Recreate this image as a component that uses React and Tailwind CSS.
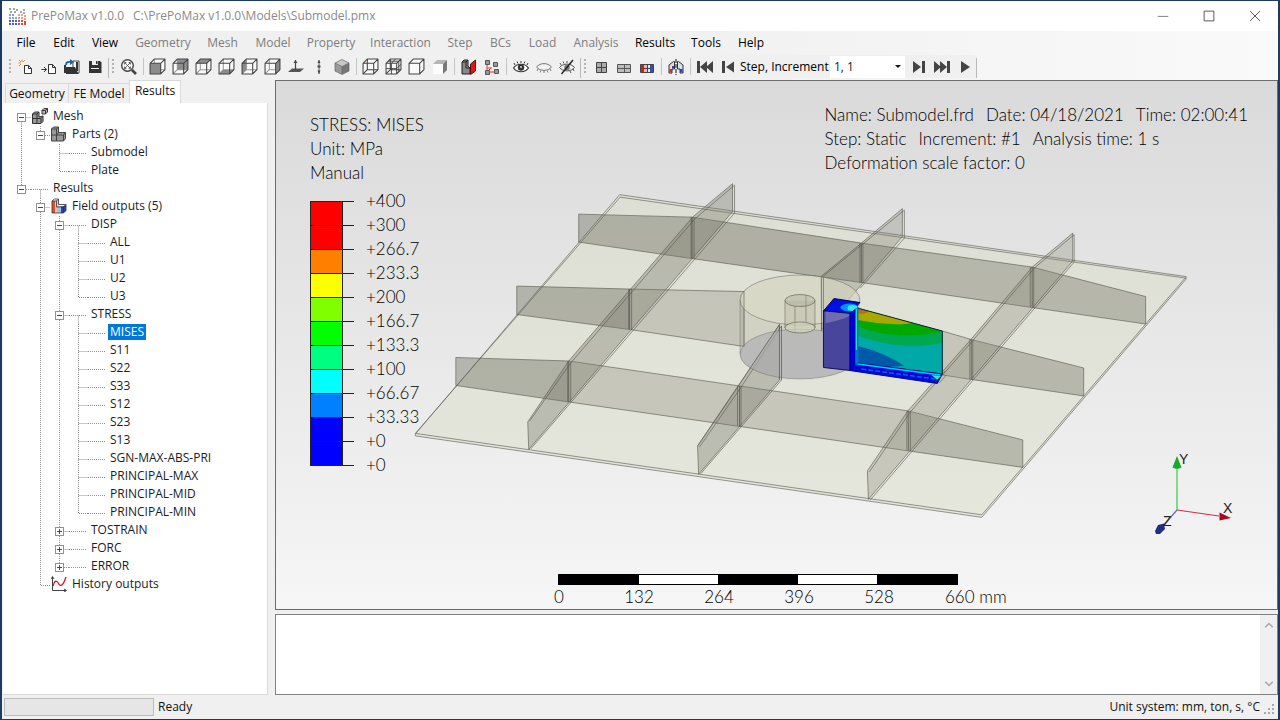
import React from "react";

const MENU = [
  ["File", "w-[38px]", true],
  ["Edit", "w-[38px]", true],
  ["View", "w-[44px]", true],
  ["Geometry", "w-[72px]", false],
  ["Mesh", "w-[47px]", false],
  ["Model", "w-[54px]", false],
  ["Property", "w-[62px]", false],
  ["Interaction", "w-[77px]", false],
  ["Step", "w-[42px]", false],
  ["BCs", "w-[39px]", false],
  ["Load", "w-[45px]", false],
  ["Analysis", "w-[62px]", false],
  ["Results", "w-[56px]", true],
  ["Tools", "w-[46px]", true],
  ["Help", "w-[44px]", true],
];

/* Guide letters: "|" line passing through, "T" branch, "L" last branch, "F" first root, " " empty. */
const TREE = [
  { g: "F", box: "-", icon: "mesh", label: "Mesh", open: true },
  { g: "|L", box: "-", icon: "parts", label: "Parts (2)", open: true },
  { g: "| T", label: "Submodel" },
  { g: "| L", label: "Plate" },
  { g: "L", box: "-", label: "Results", open: true },
  { g: " T", box: "-", icon: "field", label: "Field outputs (5)", open: true },
  { g: " |T", box: "-", label: "DISP", open: true },
  { g: " ||T", label: "ALL" },
  { g: " ||T", label: "U1" },
  { g: " ||T", label: "U2" },
  { g: " ||L", label: "U3" },
  { g: " |T", box: "-", label: "STRESS", open: true },
  { g: " ||T", label: "MISES", selected: true },
  { g: " ||T", label: "S11" },
  { g: " ||T", label: "S22" },
  { g: " ||T", label: "S33" },
  { g: " ||T", label: "S12" },
  { g: " ||T", label: "S23" },
  { g: " ||T", label: "S13" },
  { g: " ||T", label: "SGN-MAX-ABS-PRI" },
  { g: " ||T", label: "PRINCIPAL-MAX" },
  { g: " ||T", label: "PRINCIPAL-MID" },
  { g: " ||L", label: "PRINCIPAL-MIN" },
  { g: " |T", box: "+", label: "TOSTRAIN" },
  { g: " |T", box: "+", label: "FORC" },
  { g: " |L", box: "+", label: "ERROR" },
  { g: " L", icon: "history", label: "History outputs" },
];

const LEGEND_COLORS = ["#ff0000", "#ff0000", "#ff8000", "#ffff00", "#80ff00", "#00ff00", "#00ff80", "#00ffff", "#0080ff", "#0000ff", "#0000ff"];
const LEGEND_VALUES = ["+400", "+300", "+266.7", "+233.3", "+200", "+166.7", "+133.3", "+100", "+66.67", "+33.33", "+0", "+0"];

function Svg({ children, className = "h-4 w-4" }) {
  return (
    <svg viewBox="0 0 16 16" className={className} fill="none" aria-hidden="true">
      {children}
    </svg>
  );
}

function AppLogo() {
  const blue = [[0, 0], [4, 0], [7, 1], [1, 3], [5, 3], [0, 6], [3, 6], [0, 9], [3, 9], [6, 9], [0, 12], [3, 12], [6, 12], [0, 15], [3, 15], [6, 15]];
  const red = [[14, 1], [11, 3], [14, 4], [9, 6], [12, 6], [15, 7], [9, 9], [12, 9], [15, 10], [9, 12], [12, 12], [15, 13], [9, 15], [12, 15], [15, 15]];
  return (
    <svg viewBox="0 0 17 17" className="h-[17px] w-[17px]" aria-hidden="true">
      {blue.map(([x, y], i) => (
        <rect key={i} x={x} y={y} width="2" height="2" fill={y > 10 ? "#3f63b5" : y > 5 ? "#8ea3d3" : "#9aa5b5"} />
      ))}
      {red.map(([x, y], i) => (
        <rect key={i} x={x} y={y} width="2" height="2" fill={y > 11 ? "#c65348" : y > 5 ? "#eda182" : "#a8a8b4"} />
      ))}
    </svg>
  );
}

const CUBE_FACES = {
  front: "M1 5H11V15H1Z",
  back: "M5 1H15V11H5Z",
  top: "M1 5L5 1H15L11 5Z",
  bottom: "M1 15L5 11H15L11 15Z",
  left: "M1 5L5 1V11L1 15Z",
  right: "M11 5L15 1V11L11 15Z",
};

function Cube({ face, solid, grid }) {
  return (
    <svg viewBox="0 0 16 16" className="h-[17px] w-[17px]" fill="none" aria-hidden="true">
      <path d="M1 5L5 1H15V11L11 15H1Z" fill="#fafafa" />
      {!solid && <path d="M5 1V11H15M5 11L1 15" stroke={face ? "#999" : "#444"} />}
      {face && <path d={CUBE_FACES[face]} fill="#8c8c8c" />}
      <path d="M1 5H11V15H1ZM1 5L5 1H15L11 5M15 1V11L11 15" stroke="#444" strokeLinejoin="round" />
      {grid && <path d="M6 5V15M1 10H11M3 3H13V13M6 5L10 1M11 10L15 6" stroke="#444" strokeWidth="0.900" />}
    </svg>
  );
}

const ICONS = {
  newModel: (
    <Svg>
      <path d="M6.500 6.500H10.500L13.500 9.500V14.500H6.500Z" fill="#fff" stroke="#333" />
      <path d="M10.500 6.500V9.500H13.500" stroke="#333" />
      <path d="M4 0.500V3M0.500 4H3M1 1L3 3M7 1L5 3M1 7L3 5" stroke="#d99a3c" />
    </Svg>
  ),
  importFile: (
    <Svg>
      <path d="M7.500 5.500H11.500L14.500 8.500V14.500H7.500Z" fill="#fff" stroke="#333" />
      <path d="M11.500 5.500V8.500H14.500M0.500 10.500H5.500M3 8L5.500 10.500L3 13" stroke="#333" />
    </Svg>
  ),
  openFile: (
    <Svg>
      <path d="M9 2H15V14H9Z" fill="#fff" stroke="#444" />
      <path d="M1 8H11L14.500 15H2Z" fill="#333" />
      <path d="M1 6V14M13 3V12" stroke="#333" strokeWidth="2" />
      <path d="M2 6C2 3 4 2.500 8 3" stroke="#1d5f96" strokeWidth="1.800" />
      <path d="M6 0L10 3L6 6Z" fill="#1d5f96" />
    </Svg>
  ),
  save: (
    <Svg>
      <path d="M2 2H13L14.500 3.500V14H2Z" fill="#333" />
      <path d="M5 2H11V6H5ZM4 9H12V10H4Z" fill="#eee" />
      <path d="M9 2H10.500V5H9Z" fill="#333" />
    </Svg>
  ),
  zoomFit: (
    <Svg>
      <circle cx="6.500" cy="6.500" r="5.800" fill="#fff" stroke="#444" strokeWidth="1.400" />
      <path d="M4 4L9 9M9 4L4 9M3.500 5.500V3.500H5.500M7.500 3.500H9.500V5.500M9.500 7.500V9.500H7.500M5.500 9.500H3.500V7.500" stroke="#555" strokeWidth="0.900" />
      <path d="M11 11L15 15" stroke="#444" strokeWidth="2.600" />
    </Svg>
  ),
  normalView: (
    <Svg>
      <path d="M0 13L4 9.500H16L12 13Z" fill="#555" />
      <path d="M7.500 1V11" stroke="#444" strokeWidth="1.200" />
      <path d="M5.500 4L7.500 1L9.500 4Z" fill="#444" />
    </Svg>
  ),
  verticalView: (
    <Svg>
      <path d="M8 1V15" stroke="#555" />
      <path d="M6.500 4L8 1L9.500 4ZM6.500 6.500H9.500V8.500H6.500ZM6.500 11.500H9.500L8 15Z" fill="#444" />
    </Svg>
  ),
  isometric: (
    <Svg>
      <path d="M8 0.500L15 4L8 7.500L1 4Z" fill="#c9c9c9" />
      <path d="M1 4L8 7.500V15.500L1 12Z" fill="#9a9a9a" />
      <path d="M15 4L8 7.500V15.500L15 12Z" fill="#777" />
      <path d="M8 0.500L15 4V12L8 15.500L1 12V4ZM1 4L8 7.500L15 4M8 7.500V15" stroke="#666" strokeWidth="0.700" />
    </Svg>
  ),
  shaded: (
    <Svg>
      <path d="M1 5L5 1H15L11 5Z" fill="#b5b5b5" />
      <path d="M11 5L15 1V11L11 15Z" fill="#777" />
      <path d="M1 5H11V15H1Z" fill="#fcfcfc" />
    </Svg>
  ),
  section: (
    <Svg>
      <path d="M1 3L3 1H7V7L9 9V15H1Z" fill="#888" stroke="#222" />
      <path d="M1 3H5V9H9M5 3L7 1" stroke="#222" />
      <path d="M9.500 5L14.500 1V12L9.500 15.500Z" fill="#e01515" stroke="#5a1010" />
    </Svg>
  ),
  exploded: (
    <Svg>
      <path d="M3 3V13M3 9H8M3 13L7 9M10 13H5" stroke="#e33" />
      <path d="M1.500 1.500H5.500V5.500H1.500ZM9.500 3.500H13.500V7.500H9.500ZM1.500 11.500H5.500V15.500H1.500ZM10.500 10.500H14.500V14.500H10.500Z" fill="#999" stroke="#555" />
    </Svg>
  ),
  eye: (
    <Svg>
      <path d="M0.500 9C4 4 12 4 15.500 9C12 14 4 14 0.500 9Z" fill="#fff" stroke="#333" strokeWidth="1.200" />
      <circle cx="8" cy="8.500" r="3.200" fill="#333" />
      <circle cx="8" cy="8" r="1" fill="#ddd" />
      <path d="M2 6L1 4M5 4.500L4 2.500M8 4V2M11 4.500L12 2.500M14 6L15 4" stroke="#333" />
    </Svg>
  ),
  eyeClosed: (
    <Svg>
      <path d="M0.500 8C4 3.500 12 3.500 15.500 8C12 12.500 4 12.500 0.500 8Z" stroke="#777" />
      <path d="M2 10L1 12M5 11.500L4 13.500M8 12V14M11 11.500L12 13.500M14 10L15 12" stroke="#777" />
    </Svg>
  ),
  eyeOff: (
    <Svg>
      <path d="M0.500 8.500C4 4 12 4 15.500 8.500C12 13 4 13 0.500 8.500Z" stroke="#555" />
      <circle cx="8" cy="8.500" r="2.800" fill="#777" />
      <path d="M2 6L1 4M5 4.500L4 2.500M8 4V2M11 12L12 14M14 10L15 12" stroke="#555" />
      <path d="M2.500 15L14 1" stroke="#222" strokeWidth="1.400" />
    </Svg>
  ),
  gridFour: (
    <Svg>
      <path d="M3.500 3.500H13.500V13.500H3.500Z" fill="#aaa" stroke="#444" />
      <path d="M8.500 3V13M3 8.500H13" stroke="#444" />
    </Svg>
  ),
  gridWide: (
    <Svg>
      <path d="M1.500 5.500H14.500V13.500H1.500Z" fill="#bbb" stroke="#555" />
      <path d="M8.500 5V13M1.500 9.500H14.500" stroke="#555" />
    </Svg>
  ),
  gridColor: (
    <Svg>
      <path d="M1.500 5H5V13H1.500Z" fill="#c22" />
      <path d="M5 5H8V13H5Z" fill="#f0b8a0" />
      <path d="M8 5H11V13H8Z" fill="#dde6f5" />
      <path d="M11 5H14.500V13H11Z" fill="#2e4fc0" />
      <path d="M1.500 5.500H14.500V13.500H1.500ZM8.500 5V13M4 9.500H12" stroke="#444" />
    </Svg>
  ),
  symmetry: (
    <Svg>
      <path d="M5.500 2.500L1 6V14H4V10H6.500V2.500Z" fill="#f2d8d0" stroke="#333" />
      <path d="M10.500 2.500L15 6V14H12V10H9.500V2.500Z" fill="#d5e0f5" stroke="#333" />
      <path d="M1.500 10H4V13.500H1.500Z" fill="#d22" />
      <path d="M12 10H14.500V13.500H12ZM4 7H6V9.500H4Z" fill="#2448b8" />
      <path d="M8 0V16" stroke="#111" strokeDasharray="4 1" />
    </Svg>
  ),
  first: (
    <svg viewBox="0 0 18 16" className="h-4 w-[18px]" aria-hidden="true">
      <path d="M1 2H4V14H1ZM4 8L11 2V14ZM10 8L17 2V14Z" fill="#444" />
    </svg>
  ),
  previous: (
    <Svg>
      <path d="M2 2H5V14H2ZM6 8L14 2.500V13.500Z" fill="#444" />
    </Svg>
  ),
  next: (
    <Svg>
      <path d="M11 2H14V14H11ZM10 8L2 2V14Z" fill="#444" />
    </Svg>
  ),
  last: (
    <svg viewBox="0 0 18 16" className="h-4 w-[18px]" aria-hidden="true">
      <path d="M14 2H17V14H14ZM14 8L7 2V14ZM8 8L1 2V14Z" fill="#444" />
    </svg>
  ),
  play: (
    <Svg>
      <path d="M4 2L13 8L4 14Z" fill="#444" />
    </Svg>
  ),
  mesh: (
    <Svg>
      <path d="M0.500 6L2.500 4H7V9L11 8V13.500L9 15.500H0.500Z" fill="#999" stroke="#333" />
      <path d="M0.500 6H5V15M0.500 10.500H9V15M9 10.500L11 8.500M5 6L7 4" stroke="#333" />
      <path d="M10 2.500L12 0.500H15.500V4L13.500 6H10ZM10 2.500H13.500V6M13.500 2.500L15.500 0.500" fill="#bbb" stroke="#333" />
    </Svg>
  ),
  parts: (
    <Svg>
      <path d="M0.500 3L2.500 1H7.500V6.500H14.500V12.500L12.500 15H0.500Z" fill="#999" stroke="#444" />
      <path d="M0.500 3H5.500V15M0.500 9H12.500V15M5.500 3L7.500 1M12.500 9L14.500 6.500M5.500 9L7.500 6.500" stroke="#444" />
    </Svg>
  ),
  field: (
    <Svg>
      <path d="M1 3H5.500V15H1Z" fill="#e0512f" />
      <path d="M4 3L7.500 1V7L6 15H4Z" fill="#f3c9b5" />
      <path d="M6 8H12V15H6Z" fill="#a9bbe8" />
      <path d="M10 9L15 7V13L12 15H10Z" fill="#2343a8" />
      <path d="M1 3L3.500 1H7.500V6.500H15V12.500L12.500 15H1ZM1 3H5.500V9H12.500V15M5.500 3L7.500 1M12.500 9L15 6.500" stroke="#333" strokeWidth="0.800" />
    </Svg>
  ),
  history: (
    <Svg>
      <path d="M1.500 1V14.500H15M0 3L1.500 0.500L3 3M13 13L15.500 14.500L13 16" stroke="#444" />
      <path d="M2 10C4 4 5.500 4 7.500 7.500C9.500 11 12 10 15 1" stroke="#c11a2b" strokeWidth="1.300" />
    </Svg>
  ),
};

function Tool({ label, icon }) {
  return (
    <button type="button" aria-label={label} className="flex h-[22px] w-[23px] shrink-0 items-center justify-center">
      {icon}
    </button>
  );
}

function Separator() {
  return (
    <span className="flex w-[6px] shrink-0 justify-center">
      <span className="h-[17px] w-px bg-[#c4c4c4]" />
    </span>
  );
}

function Grip() {
  return (
    <svg viewBox="0 0 8 16" className="h-4 w-2 shrink-0" aria-hidden="true">
      <path d="M3 0H5V2H3ZM3 4H5V6H3ZM3 8H5V10H3ZM3 12H5V14H3Z" fill="#b4b4b4" />
    </svg>
  );
}

function GroupEnd() {
  return <span className="h-[20px] w-px shrink-0 self-end bg-[#b9b9b9]" />;
}

function Toolbar() {
  return (
    <div role="toolbar" aria-label="Main toolbar" className="flex h-[25px] items-center pb-[2px] pl-1">
      <div className="flex h-full items-center rounded-r bg-[#f0f0f0]">
        <Grip />
        <Tool label="New" icon={ICONS.newModel} />
        <Tool label="Import" icon={ICONS.importFile} />
        <Tool label="Open" icon={ICONS.openFile} />
        <Tool label="Save" icon={ICONS.save} />
        <span className="w-[2px]" />
        <GroupEnd />
        <Grip />
        <Tool label="Zoom to fit" icon={ICONS.zoomFit} />
        <Separator />
        <Tool label="Front view" icon={<Cube face="front" />} />
        <Tool label="Back view" icon={<Cube face="back" />} />
        <Tool label="Top view" icon={<Cube face="top" />} />
        <Tool label="Bottom view" icon={<Cube face="bottom" />} />
        <Tool label="Left view" icon={<Cube face="left" />} />
        <Tool label="Right view" icon={<Cube face="right" />} />
        <Tool label="Normal view" icon={ICONS.normalView} />
        <Tool label="Vertical view" icon={ICONS.verticalView} />
        <Tool label="Isometric view" icon={ICONS.isometric} />
        <Separator />
        <Tool label="Wireframe" icon={<Cube />} />
        <Tool label="Element edges" icon={<Cube grid />} />
        <Tool label="Model edges" icon={<Cube solid />} />
        <Tool label="No edges" icon={ICONS.shaded} />
        <Separator />
        <Tool label="Section view" icon={ICONS.section} />
        <Tool label="Exploded view" icon={ICONS.exploded} />
        <Separator />
        <Tool label="Show all" icon={ICONS.eye} />
        <Tool label="Hide" icon={ICONS.eyeClosed} />
        <Tool label="Invert visibility" icon={ICONS.eyeOff} />
        <span className="w-[2px]" />
        <GroupEnd />
        <Grip />
        <Tool label="Undeformed" icon={ICONS.gridFour} />
        <Tool label="Deformed" icon={ICONS.gridWide} />
        <Tool label="Color contours" icon={ICONS.gridColor} />
        <Separator />
        <Tool label="Transformation" icon={ICONS.symmetry} />
        <Separator />
        <Tool label="First increment" icon={ICONS.first} />
        <Tool label="Previous increment" icon={ICONS.previous} />
        <label htmlFor="step" className="w-[91px] shrink-0 whitespace-nowrap pl-px text-black">
          Step, Increment
        </label>
        <span className="relative flex h-[22px] w-[75px] shrink-0 bg-white">
          <select id="step" className="w-full appearance-none bg-transparent pl-1 text-[12px] leading-[18px] text-[#222]" defaultValue="1, 1">
            <option>1, 1</option>
          </select>
          <svg viewBox="0 0 6 4" className="pointer-events-none absolute right-1 top-[9px] h-1 w-1.5" aria-hidden="true">
            <path d="M0 0H6L3 3Z" fill="#111" />
          </svg>
        </span>
        <span className="w-[2px]" />
        <Tool label="Next increment" icon={ICONS.next} />
        <Tool label="Last increment" icon={ICONS.last} />
        <Tool label="Animate" icon={ICONS.play} />
        <GroupEnd />
      </div>
    </div>
  );
}

function Guide({ kind, box }) {
  const lines = {
    "|": "M9.500 0V18",
    T: "M9.500 0V18M9.500 9.500H19",
    L: "M9.500 0V9.500H19",
    F: "M9.500 9.500V18M9.500 9.500H19",
    " ": "",
  };
  return (
    <svg viewBox="0 0 19 18" className="h-[18px] w-[19px] shrink-0" fill="none" aria-hidden="true">
      <path d={lines[kind]} stroke="#8f8f8f" strokeDasharray="1 1" />
      {box && (
        <>
          <rect x="5.500" y="5.500" width="8" height="8" fill="#fff" stroke="#919191" />
          <path d={box === "+" ? "M7 9.500H12M9.500 7V12" : "M7 9.500H12"} stroke="#33459c" />
        </>
      )}
    </svg>
  );
}

function TreeRow({ row }) {
  const cells = row.g.split("");
  return (
    <li role="treeitem" aria-level={cells.length} aria-selected={!!row.selected} aria-expanded={row.box ? row.box === "-" : undefined} className="flex h-[18px] items-start">
      {cells.map((kind, i) => {
        const isLast = i === cells.length - 1;
        return isLast && row.box ? (
          <button key={i} type="button" aria-label={`Toggle ${row.label}`} className="shrink-0">
            <Guide kind={kind} box={row.box} />
          </button>
        ) : (
          <Guide key={i} kind={kind} />
        );
      })}
      {row.icon ? (
        <span className="flex w-[19px] shrink-0 pl-[1px]">{ICONS[row.icon]}</span>
      ) : (
        <svg viewBox="0 0 19 18" className="h-[18px] w-[19px] shrink-0" aria-hidden="true">
          <path d={row.open ? "M0 9.500H17M9.500 9.500V18" : "M0 9.500H17"} stroke="#8f8f8f" strokeDasharray="1 1" fill="none" />
        </svg>
      )}
      <span className={row.selected ? "ml-[1px] whitespace-nowrap bg-[#0078d7] px-[2px] leading-4 text-white" : "ml-[1px] whitespace-nowrap px-[2px] leading-4"}>{row.label}</span>
    </li>
  );
}

function SidePanel() {
  return (
    <aside className="flex w-[266px] shrink-0 flex-col pl-[1px]">
      <div role="tablist" className="flex h-[23px] items-end pl-[2px]">
        <button role="tab" aria-selected="false" type="button" className="h-5 w-[64px] whitespace-nowrap border border-b-0 border-[#d9d9d9] bg-[#f0f0f0]">Geometry</button>
        <button role="tab" aria-selected="false" type="button" className="h-5 w-[60px] whitespace-nowrap border-t border-[#d9d9d9] bg-[#f0f0f0]">FE Model</button>
        <button role="tab" aria-selected="true" type="button" className="h-[23px] w-[52px] whitespace-nowrap border border-b-0 border-[#d9d9d9] bg-white pb-[2px]">Results</button>
      </div>
      <ul role="tree" aria-label="Results" className="min-h-0 flex-1 overflow-hidden border-b border-r border-[#d9d9d9] bg-white pl-[9px] pt-[5px] text-[#1c1c1c]">
        {TREE.map((row, i) => (
          <TreeRow key={i} row={row} />
        ))}
      </ul>
    </aside>
  );
}

function Model() {
  const line = { stroke: "#55554d", strokeOpacity: 0.6, strokeWidth: 1, strokeLinejoin: "round" };
  const dark = { fill: "#6e6e60", fillOpacity: 0.42, ...line };
  const side = { fill: "#77776a", fillOpacity: 0.4, ...line };
  const pale = { fill: "#8c8c78", fillOpacity: 0.32, ...line };
  return (
    <svg viewBox="276 81 1002 528" className="absolute inset-0 h-full w-full" fill="none" role="img" aria-label="Stress model">
      <path d="M415.500 434L620 194.500L1187 276.500V279L982.500 517.500L415.500 436Z" fill="#dadccb" fillOpacity="0.550" {...line} />
      <path d="M415.500 433.500L620.500 197L1186.500 278M415.500 433.500L982.500 515L1186.500 277.500" {...line} />

      <path d="M579 214L692.500 217V258.500L579 242Z" {...dark} />
      <path d="M692.500 217L862 243V282.500L692.500 258.500Z" {...dark} />
      <path d="M862 243L1033 267V307.500L862 282.500Z" {...side} />
      <path d="M1033 267L1146.500 296.500V324L1033 307.500Z" {...side} />

      <path d="M517 286L630 289V329.500L517 314.500Z" {...dark} />
      <path d="M630 289L744.500 291.500V346.500L630 329.500Z" {...pale} />
      <path d="M943 331L972 339.500V379.500L943 375Z" {...pale} />
      <path d="M972 339.500L1084.500 368V396L972 379.500Z" {...side} />

      <path d="M456 357.500L569 361V402L456 385.500Z" {...dark} />
      <path d="M569 361L740 386V426.500L569 402Z" {...pale} />
      <path d="M740 386L909 411V451L740 426.500Z" {...pale} />
      <path d="M909 411L1023.500 440V467.500L909 451Z" {...side} />

      <path d="M528 422L569 361L693 217L733 183.500V211.500L529 449.500Z" {...side} fillOpacity="0.360" />
      <path d="M530 421L571 363L695 219L735 185V213L531 449" {...line} />
      <path d="M568 361V402M571 362V402M629 289V329M632 289V330M691.500 217V258M694.500 217V259" {...line} />
      <path d="M698 446L739 386L780 324.500V380L699 474.500Z" {...side} fillOpacity="0.360" />
      <path d="M700 447L741 388L782 326V380L701 474M738 386V426M741.500 386V427" {...line} />
      <path d="M821.500 276.500L862 243L903 208.500V236.500L848 301L822 330Z" {...side} fillOpacity="0.300" />
      <path d="M824 276L905 210V238L861 288M860.500 243V283M863.500 243V283" {...line} />
      <path d="M868 471L908.500 411L972 339L1033 267L1073.500 233V261L869 499.500Z" {...pale} />
      <path d="M870 472L911 412L974 340L1035 268L1075 234.500V262L871 500" {...line} />
      <path d="M907.500 411V450M911 411V451M970.500 339V379M973.500 340V380M1031 267V307M1034.500 267V308" {...line} />

      <path d="M740.500 300A60 25 0 0 1 860.500 300V354A60 25 0 0 1 740.500 354Z" fill="#9a9a82" fillOpacity="0.220" />
      <ellipse cx="800.500" cy="300" rx="60" ry="25" fill="#dedec8" fillOpacity="0.550" {...line} strokeOpacity="0.450" />
      <ellipse cx="800.500" cy="354" rx="60" ry="25" fill="#aaaab2" fillOpacity="0.600" {...line} strokeOpacity="0.350" />
      <path d="M740.500 300V354M744.500 291V347" {...line} strokeOpacity="0.350" />
      <path d="M785.500 300.500V328M815.500 300.500V328M795.500 306V333M806.500 295V322" {...line} strokeOpacity="0.500" />
      <path d="M785.500 300.500H815.500V328H785.500Z" fill="#8c8c70" fillOpacity="0.180" />
      <ellipse cx="800.500" cy="300.500" rx="15" ry="6" fill="#a5a592" fillOpacity="0.350" {...line} />
      <ellipse cx="800.500" cy="327.500" rx="15" ry="5.500" fill="#d8d8bc" fillOpacity="0.600" {...line} />
      <path d="M698 446L780 324.500V380M782 326V380M822 277V331M824 277V331" {...line} />

      <path d="M858 308L943 331V375L858 365Z" fill="#00a8a8" />
      <path d="M858 308L943 331V343C920 348 885 347 858 335Z" fill="#00a850" />
      <path d="M858 308L943 331C925 337 885 338 858 326Z" fill="#00a800" />
      <path d="M858 308L914 323C896 326 876 323 858 320Z" fill="#a8a800" />
      <path d="M858 308L870 311C867 314 862 314 858 313Z" fill="#b07020" />
      <path d="M858 346C880 351 894 359 905 366L890 367L858 364Z" fill="#0058a8" />
      <path d="M858 308L943 331V375" stroke="#123" />
      <path d="M850 370.500L858 363L943 374L938 383.500Z" fill="#0008d8" stroke="#001070" />
      <path d="M858 364L941 375" stroke="#00c8ff" strokeWidth="1.500" />
      <path d="M862 369L936 379" stroke="#0060f0" strokeWidth="1.500" strokeDasharray="5 2" />
      <path d="M932 375L942 376L938 380Z" fill="#3be0d0" />
      <path d="M936 382L946 371M940 383L947 375" {...line} />
      <path d="M824 311L834.500 298.500L860.500 302.500L850.500 313.500Z" fill="#0010e0" stroke="#000060" />
      <ellipse cx="850" cy="307.500" rx="9" ry="4" fill="#0090ff" />
      <ellipse cx="853" cy="308" rx="5" ry="3" fill="#35e8e8" />
      <path d="M824 311L850.500 313.500V370.500L824 367.500Z" fill="#48459c" stroke="#101050" />
      <path d="M826 311.500L850 314V316C842 320 834 322 826 323Z" fill="#6f6cb0" />
      <path d="M850.500 313.500L856 309V365L850.500 370.500Z" fill="#0000d0" stroke="#000060" strokeWidth="0.600" />
      <path d="M856 309L859 307V363L856 366Z" fill="#0074d0" />
      <path d="M857 309V350" stroke="#2bdcb8" strokeWidth="1.200" />
    </svg>
  );
}

function Triad() {
  return (
    <svg viewBox="0 0 90 100" className="absolute bottom-[66px] right-[40px] h-[100px] w-[90px] font-['Liberation_Sans',sans-serif]" aria-label="Axes" role="img">
      <path d="M30 67V25" stroke="#3ccb3c" strokeWidth="1.200" />
      <path d="M30 67L72 73" stroke="#d03048" strokeWidth="1.200" />
      <path d="M30 67L17 82" stroke="#6a6ab8" strokeWidth="1.200" />
      <path d="M30 13L34.500 24.500Q30 27 25.500 24.500Z" fill="#18a82a" />
      <path d="M84 75L72.500 69.500V77.500Z" fill="#a80820" />
      <path d="M8 88L11 82L17 80.500L18 86L13 91L9 91Z" fill="#1f2f86" />
      <text x="32" y="21" fontSize="14" fill="#222">Y</text>
      <text x="76" y="70" fontSize="14" fill="#222">X</text>
      <text x="16" y="83" fontSize="14" fill="#222">Z</text>
    </svg>
  );
}

function Viewport() {
  return (
    <section aria-label="Viewport" className="relative min-h-0 flex-1 overflow-hidden border border-[#6c6c6c] bg-linear-to-b from-[#dadada] to-[#f6f6f6] font-['Lato',sans-serif] text-[17px] font-light leading-6 text-black">
      <Model />
      <div className="relative flex justify-between pl-[34px] pr-[29px]">
        <div className="pt-[32px]">
          <p>STRESS: MISES</p>
          <p>Unit: MPa</p>
          <p>Manual</p>
          <div className="flex pt-[4px]">
            <div className="mt-[12px] w-[44px]">
              {LEGEND_COLORS.map((color, i) => (
                <div key={i} className="flex h-6">
                  <span className="w-[33px] border-x border-t border-[#222]" style={{ backgroundColor: color }} />
                  <span className="w-[11px] border-t border-[#222]" />
                </div>
              ))}
              <div className="h-px bg-[#222]" />
            </div>
            <ul className="pl-[12px]">
              {LEGEND_VALUES.map((v, i) => (
                <li key={i} className="h-6">{v}</li>
              ))}
            </ul>
          </div>
        </div>
        <div className="whitespace-nowrap pt-[22px]">
          <p className="flex gap-3"><span>Name: Submodel.frd</span><span>Date: 04/18/2021</span><span>Time: 02:00:41</span></p>
          <p className="flex gap-3"><span>Step: Static</span><span>Increment: #1</span><span>Analysis time: 1 s</span></p>
          <p>Deformation scale factor: 0</p>
        </div>
      </div>
      <div className="absolute bottom-0 left-[282px]">
        <div className="flex h-[11px] w-[400px] border border-black">
          {[0, 1, 2, 3, 4].map((i) => (
            <span key={i} className={i % 2 ? "flex-1 bg-white" : "flex-1 bg-black"} />
          ))}
        </div>
        <div className="-ml-[39px] flex h-6 whitespace-nowrap text-center">
          {["0", "132", "264", "396", "528"].map((v) => (
            <span key={v} className="w-20">{v}</span>
          ))}
          <span className="w-24 pl-[26px] text-left">660 mm</span>
        </div>
      </div>
      <Triad />
    </section>
  );
}

export default function App() {
  return (
    <div className="flex h-screen flex-col border-x-2 border-t border-b border-[#1f3a5f] bg-[#f0f0f0] font-['Open_Sans','Noto_Sans',sans-serif] text-[12px] leading-4 text-[#111]">
      <header className="flex h-[30px] shrink-0 items-center bg-white pl-[7px]">
        <AppLogo />
        <h1 className="flex gap-[9px] pl-[5px] text-[#8a8a8a]">
          <span>PrePoMax v1.0.0</span>
          <span>C:\PrePoMax v1.0.0\Models\Submodel.pmx</span>
        </h1>
        <div className="ml-auto flex">
          <button type="button" aria-label="Minimize" className="flex w-[46px] justify-center"><Svg className="h-3 w-3"><path d="M1 8.500H15" stroke="#555" /></Svg></button>
          <button type="button" aria-label="Maximize" className="flex w-[46px] justify-center"><Svg className="h-3 w-3"><path d="M1.500 1.500H14.500V14.500H1.500Z" stroke="#555" strokeWidth="1.300" /></Svg></button>
          <button type="button" aria-label="Close" className="flex w-[46px] justify-center"><Svg className="h-3 w-3"><path d="M1.500 1.500L14.500 14.500M14.500 1.500L1.500 14.500" stroke="#555" strokeWidth="1.300" /></Svg></button>
        </div>
      </header>
      <div className="shrink-0 bg-linear-to-r from-[#f0f0f0] from-50% to-[#fafafa]">
        <nav aria-label="Menu" className="flex h-6 items-center pl-[5px]">
          {MENU.map(([label, width, enabled]) => (
            <button key={label} type="button" disabled={!enabled} className={`${width} shrink-0 whitespace-nowrap text-center ${enabled ? "text-black" : "text-[#7d7d7d]"}`}>
              {label}
            </button>
          ))}
        </nav>
        <Toolbar />
      </div>
      <main className="flex min-h-0 flex-1">
        <SidePanel />
        <div className="flex min-w-0 flex-1 flex-col gap-1 pl-[7px]">
          <Viewport />
          <div className="flex h-[81px] shrink-0 border border-[#828282] bg-white">
            <textarea aria-label="Output log" readOnly className="min-w-0 flex-1 resize-none bg-white outline-none" />
            <div className="flex w-[17px] flex-col items-center justify-between bg-[#f0f0f0] py-1">
              <Svg className="h-3 w-3"><path d="M3 11L8 6L13 11" stroke="#a8a8a8" strokeWidth="2" /></Svg>
              <Svg className="h-3 w-3"><path d="M3 5L8 10L13 5" stroke="#a8a8a8" strokeWidth="2" /></Svg>
            </div>
          </div>
        </div>
      </main>
      <footer className="flex h-6 shrink-0 items-center pl-[2px] pr-[2px]">
        <div role="progressbar" aria-label="Progress" aria-valuenow={0} className="h-[18px] w-[150px] border border-[#bcbcbc] bg-[#e6e6e6]" />
        <span className="pl-[4px]">Ready</span>
        <span className="ml-auto pr-[2px]">Unit system: mm, ton, s, °C</span>
        <svg viewBox="0 0 14 14" className="mt-1 h-[14px] w-[14px]" aria-hidden="true">
          <path d="M10 2H12V4H10ZM6 6H8V8H6ZM10 6H12V8H10ZM2 10H4V12H2ZM6 10H8V12H6ZM10 10H12V12H10Z" fill="#a8a8a8" />
        </svg>
      </footer>
    </div>
  );
}
